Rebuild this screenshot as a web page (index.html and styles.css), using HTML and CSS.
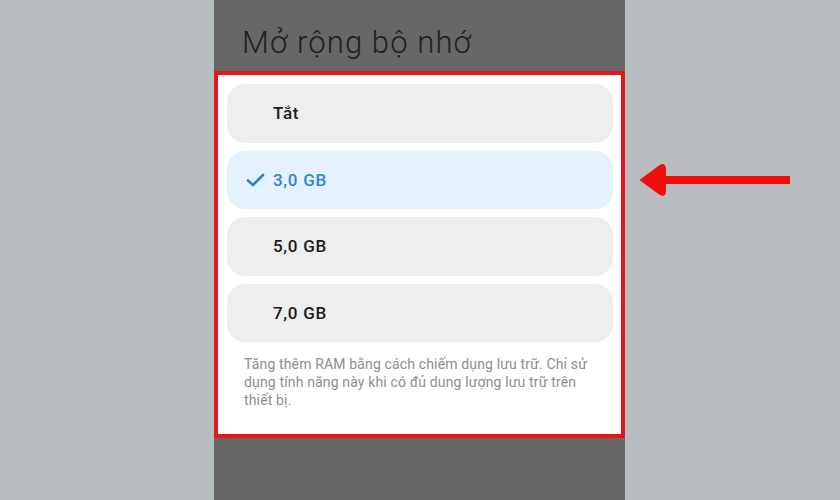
FILE: index.html
```html
<!DOCTYPE html>
<html lang="vi">
<head>
<meta charset="utf-8">
<title>Mở rộng bộ nhớ</title>
<link rel="stylesheet" href="styles.css">
</head>
<body>
<div class="page">
  <div class="phone">
    <h1 class="title">Mở rộng bộ nhớ</h1>
    <div class="highlight">
      <div class="options">
        <div class="option"><span class="check"></span><span class="label">Tắt</span></div>
        <div class="option selected">
          <span class="check">
            <svg width="19" height="14" viewBox="0 0 19 14"><path d="M2 7.5 L7 12 L17 2" fill="none" stroke="currentColor" stroke-width="2.6" stroke-linecap="round" stroke-linejoin="round"/></svg>
          </span>
          <span class="label">3,0 GB</span>
        </div>
        <div class="option"><span class="check"></span><span class="label">5,0 GB</span></div>
        <div class="option"><span class="check"></span><span class="label">7,0 GB</span></div>
      </div>
      <p class="desc">Tăng thêm RAM bằng cách chiếm dụng lưu trữ. Chỉ sử dụng tính năng này khi có đủ dung lượng lưu trữ trên thiết bị.</p>
    </div>
  </div>
  <div class="annot">
    <svg class="arrow" width="154" height="34" viewBox="0 0 154 34">
      <path d="M27 13 H152 V21 H27 Z" fill="#f20d0d"/>
      <path d="M3 17 L22 3 Q27 0 27 6 V28 Q27 34 22 31 Z" fill="#f20d0d" stroke="#f20d0d" stroke-width="2" stroke-linejoin="round"/>
    </svg>
  </div>
</div>
</body>
</html>
```
FILE: styles.css
```css
* { box-sizing: border-box; }
html, body { margin: 0; padding: 0; }
body {
  width: 840px;
  height: 500px;
  overflow: hidden;
  background: #b8bdbf;
  font-family: Roboto, "Noto Sans", "Liberation Sans", sans-serif;
}
.page {
  display: flex;
  height: 500px;
  padding-left: 214px;
}
.phone {
  width: 411px;
  height: 500px;
  background: #676767;
  display: flex;
  flex-direction: column;
}
.title {
  margin: 0;
  height: 71px;
  padding: 24px 0 0 28px;
  font-size: 31px;
  font-weight: 300;
  color: #1f1f1f;
  line-height: 37px;
  letter-spacing: 1.1px;
}
.highlight {
  width: 411px;
  height: 367px;
  border: 4px solid #e8141b;
  background: #ffffff;
  padding: 9px 8px 0 9px;
}
.options {
  display: flex;
  flex-direction: column;
  gap: 8px;
}
.option {
  height: 58.5px;
  border-radius: 18px;
  background: #eeeeee;
  display: flex;
  align-items: center;
  padding-left: 19px;
}
.option.selected {
  background: #e5f1fc;
  color: #2b86c9;
}
.check {
  width: 27px;
  display: flex;
  align-items: center;
  color: #2b80c3;
}
.label {
  font-size: 17px;
  font-weight: 500;
  color: #1a1a1a;
  letter-spacing: 0.7px;
}
.selected .label { color: #2d88cb; }
.desc {
  margin: 13px 0 0 0;
  padding: 0 12px 0 17px;
  font-size: 14px;
  line-height: 18px;
  color: #8e8e8e;
  letter-spacing: 0.15px;
}
.annot {
  padding: 163px 0 0 13px;
}
.arrow { display: block; }
```
